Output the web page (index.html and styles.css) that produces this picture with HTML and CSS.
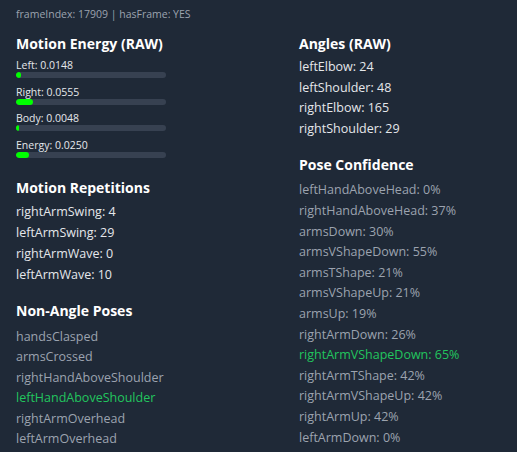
FILE: index.html
```html
<!DOCTYPE html>
<html>
<head>
<meta charset="utf-8">
<link rel="stylesheet" href="styles.css">
</head>
<body>
<div class="meta">frameIndex: 17909 | hasFrame: YES</div>
<div class="grid">
  <div class="col">
    <section class="sec energy-sec">
      <h2>Motion Energy (RAW)</h2>
      <div class="energy">
        <div class="elabel">Left: 0.0148</div>
        <div class="track"><div class="fill" style="width:3%"></div></div>
      </div>
      <div class="energy">
        <div class="elabel">Right: 0.0555</div>
        <div class="track"><div class="fill" style="width:11.3%"></div></div>
      </div>
      <div class="energy">
        <div class="elabel">Body: 0.0048</div>
        <div class="track"><div class="fill" style="width:2%"></div></div>
      </div>
      <div class="energy">
        <div class="elabel">Energy: 0.0250</div>
        <div class="track"><div class="fill" style="width:8.7%"></div></div>
      </div>
    </section>
    <section class="sec reps">
      <h2>Motion Repetitions</h2>
      <div class="row">rightArmSwing: 4</div>
      <div class="row">leftArmSwing: 29</div>
      <div class="row">rightArmWave: 0</div>
      <div class="row">leftArmWave: 10</div>
    </section>
    <section class="sec poses">
      <h2>Non-Angle Poses</h2>
      <div class="row dim">handsClasped</div>
      <div class="row dim">armsCrossed</div>
      <div class="row dim">rightHandAboveShoulder</div>
      <div class="row on">leftHandAboveShoulder</div>
      <div class="row dim">rightArmOverhead</div>
      <div class="row dim">leftArmOverhead</div>
    </section>
  </div>
  <div class="col">
    <section class="sec">
      <h2>Angles (RAW)</h2>
      <div class="row">leftElbow: 24</div>
      <div class="row">leftShoulder: 48</div>
      <div class="row">rightElbow: 165</div>
      <div class="row">rightShoulder: 29</div>
    </section>
    <section class="sec conf">
      <h2>Pose Confidence</h2>
      <div class="row dim">leftHandAboveHead: 0%</div>
      <div class="row dim">rightHandAboveHead: 37%</div>
      <div class="row dim">armsDown: 30%</div>
      <div class="row dim">armsVShapeDown: 55%</div>
      <div class="row dim">armsTShape: 21%</div>
      <div class="row dim">armsVShapeUp: 21%</div>
      <div class="row dim">armsUp: 19%</div>
      <div class="row dim">rightArmDown: 26%</div>
      <div class="row on">rightArmVShapeDown: 65%</div>
      <div class="row dim">rightArmTShape: 42%</div>
      <div class="row dim">rightArmVShapeUp: 42%</div>
      <div class="row dim">rightArmUp: 42%</div>
      <div class="row dim">leftArmDown: 0%</div>
    </section>
  </div>
</div>
</body>
</html>
```
FILE: styles.css
```css
html, body {
  margin: 0;
  padding: 0;
  background: #1f2937;
  height: 100%;
  overflow: hidden;
}
body {
  font-family: "Open Sans", "Noto Sans", sans-serif;
  color: #e5e7eb;
  padding: 6px 16px 0 16px;
  box-sizing: border-box;
}
.meta {
  font-size: 10.5px;
  line-height: 16px;
  color: #9ca3af;
}
.grid {
  display: grid;
  grid-template-columns: 267px 1fr;
  column-gap: 16px;
  margin-top: 12px;
}
.sec {
  margin-bottom: 16px;
}
.energy-sec {
  margin-bottom: 20px;
}
h2 {
  margin: 0 0 3px 0;
  font-size: 14px;
  line-height: 20px;
  font-weight: 700;
  color: #ffffff;
}
.poses h2 {
  margin-bottom: 6px;
}
.conf h2 {
  margin-bottom: 5px;
}
.energy {
  margin-top: 1px;
  margin-bottom: 6.5px;
}
.energy:first-of-type {
  margin-top: 4px;
}
.elabel {
  font-size: 10.5px;
  line-height: 14px;
  color: #e5e7eb;
}
.track {
  width: 150px;
  height: 6px;
  background: #374151;
  border-radius: 3px;
  overflow: hidden;
}
.fill {
  height: 100%;
  background: #00ff00;
  border-radius: 3px;
}
.row {
  font-size: 12.5px;
  line-height: 20.6px;
}
.reps .row {
  line-height: 21px;
}
.dim {
  color: #9ca3af;
}
.on {
  color: #22c55e;
}
```
